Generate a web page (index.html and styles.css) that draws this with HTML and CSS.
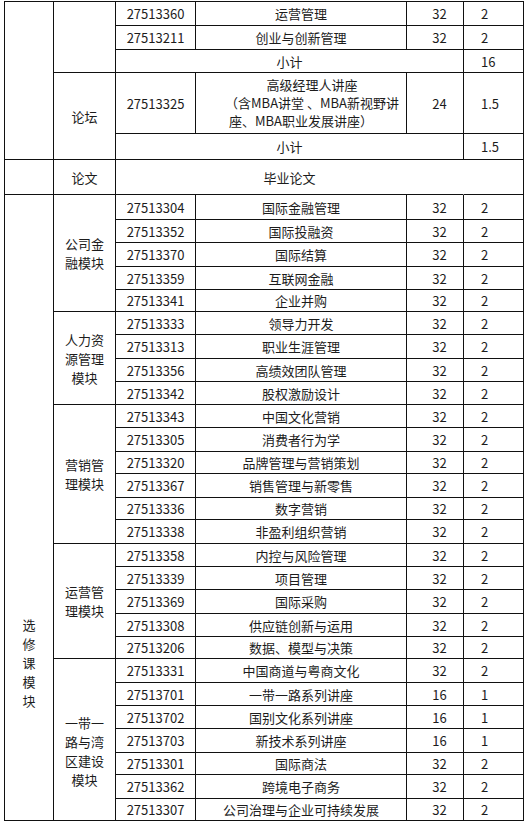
FILE: index.html
```html
<!DOCTYPE html>
<html lang="zh-CN">
<head>
<meta charset="utf-8">
<title>课程表</title>
<link rel="stylesheet" href="styles.css">
</head>
<body>
<div class="sheet">
  <div class="cell c1-top"></div>
  <div class="cell c1-thesis"></div>
  <div class="cell c1-elective"><div class="vtext">选<br>修<br>课<br>模<br>块</div></div>

  <div class="cell c2-top"></div>
  <div class="cell c2-forum">论坛</div>
  <div class="cell c2-thesis">论文</div>
  <div class="cell c2-fin">公司金<br>融模块</div>
  <div class="cell c2-hr">人力资<br>源管理<br>模块</div>
  <div class="cell c2-mkt">营销管<br>理模块</div>
  <div class="cell c2-ops">运营管<br>理模块</div>
  <div class="cell c2-br">一带一<br>路与湾<br>区建设<br>模块</div>

  <div class="cell code">27513360</div><div class="cell name">运营管理</div><div class="cell hrs">32</div><div class="cell cr">2</div>
  <div class="cell code">27513211</div><div class="cell name">创业与创新管理</div><div class="cell hrs">32</div><div class="cell cr">2</div>
  <div class="cell sum">小计</div><div class="cell cr">16</div>
  <div class="cell code">27513325</div>
  <div class="cell name multi"><div><span class="ln shift">高级经理人讲座</span><span class="ln shift">（含MBA讲堂 、MBA新视野讲</span><span class="ln">座、MBA职业发展讲座）</span></div></div>
  <div class="cell hrs">24</div><div class="cell cr">1.5</div>
  <div class="cell sum">小计</div><div class="cell cr">1.5</div>
  <div class="cell sum open">毕业论文</div><div class="cell cr"></div>

  <div class="cell code">27513304</div><div class="cell name">国际金融管理</div><div class="cell hrs">32</div><div class="cell cr">2</div>
  <div class="cell code">27513352</div><div class="cell name">国际投融资</div><div class="cell hrs">32</div><div class="cell cr">2</div>
  <div class="cell code">27513370</div><div class="cell name">国际结算</div><div class="cell hrs">32</div><div class="cell cr">2</div>
  <div class="cell code">27513359</div><div class="cell name">互联网金融</div><div class="cell hrs">32</div><div class="cell cr">2</div>
  <div class="cell code">27513341</div><div class="cell name">企业并购</div><div class="cell hrs">32</div><div class="cell cr">2</div>
  <div class="cell code">27513333</div><div class="cell name">领导力开发</div><div class="cell hrs">32</div><div class="cell cr">2</div>
  <div class="cell code">27513313</div><div class="cell name">职业生涯管理</div><div class="cell hrs">32</div><div class="cell cr">2</div>
  <div class="cell code">27513356</div><div class="cell name">高绩效团队管理</div><div class="cell hrs">32</div><div class="cell cr">2</div>
  <div class="cell code">27513342</div><div class="cell name">股权激励设计</div><div class="cell hrs">32</div><div class="cell cr">2</div>
  <div class="cell code">27513343</div><div class="cell name">中国文化营销</div><div class="cell hrs">32</div><div class="cell cr">2</div>
  <div class="cell code">27513305</div><div class="cell name">消费者行为学</div><div class="cell hrs">32</div><div class="cell cr">2</div>
  <div class="cell code">27513320</div><div class="cell name">品牌管理与营销策划</div><div class="cell hrs">32</div><div class="cell cr">2</div>
  <div class="cell code">27513367</div><div class="cell name">销售管理与新零售</div><div class="cell hrs">32</div><div class="cell cr">2</div>
  <div class="cell code">27513336</div><div class="cell name">数字营销</div><div class="cell hrs">32</div><div class="cell cr">2</div>
  <div class="cell code">27513338</div><div class="cell name">非盈利组织营销</div><div class="cell hrs">32</div><div class="cell cr">2</div>
  <div class="cell code">27513358</div><div class="cell name">内控与风险管理</div><div class="cell hrs">32</div><div class="cell cr">2</div>
  <div class="cell code">27513339</div><div class="cell name">项目管理</div><div class="cell hrs">32</div><div class="cell cr">2</div>
  <div class="cell code">27513369</div><div class="cell name">国际采购</div><div class="cell hrs">32</div><div class="cell cr">2</div>
  <div class="cell code">27513308</div><div class="cell name">供应链创新与运用</div><div class="cell hrs">32</div><div class="cell cr">2</div>
  <div class="cell code">27513206</div><div class="cell name">数据、模型与决策</div><div class="cell hrs">32</div><div class="cell cr">2</div>
  <div class="cell code">27513331</div><div class="cell name">中国商道与粤商文化</div><div class="cell hrs">32</div><div class="cell cr">2</div>
  <div class="cell code">27513701</div><div class="cell name">一带一路系列讲座</div><div class="cell hrs">16</div><div class="cell cr">1</div>
  <div class="cell code">27513702</div><div class="cell name">国别文化系列讲座</div><div class="cell hrs">16</div><div class="cell cr">1</div>
  <div class="cell code">27513703</div><div class="cell name">新技术系列讲座</div><div class="cell hrs">16</div><div class="cell cr">1</div>
  <div class="cell code">27513301</div><div class="cell name">国际商法</div><div class="cell hrs">32</div><div class="cell cr">2</div>
  <div class="cell code">27513362</div><div class="cell name">跨境电子商务</div><div class="cell hrs">32</div><div class="cell cr">2</div>
  <div class="cell code">27513307</div><div class="cell name">公司治理与企业可持续发展</div><div class="cell hrs">32</div><div class="cell cr">2</div>
</div>
</body>
</html>
```

FILE: styles.css
```css
html, body {
  margin: 0;
  padding: 0;
  background: #ffffff;
}

body {
  font-family: "Noto Sans CJK SC", "Noto Sans", sans-serif;
  font-size: 13px;
  color: #1c1c1c;
}

.sheet {
  display: grid;
  width: 520px;
  box-sizing: border-box;
  margin: 1px 0 0 4px;
  border-top: 1px solid #111;
  border-left: 1px solid #111;
  grid-template-columns: 49px 62px 80px 211px 57px 60px;
  grid-template-rows:
    24px 24px 23px 61px 26px 35px
    25px 23px 24px 23px 22px 23px 24px 23px 23px
    23px 24px 22px 24px 22px 24px 23px 23px 24px
    23px 22px 24px 23px 23px 24px 22px 24px 22px;
}

.cell {
  box-sizing: border-box;
  border-right: 1px solid #111;
  border-bottom: 1px solid #111;
  display: flex;
  align-items: center;
  justify-content: center;
  text-align: center;
  line-height: 19px;
  white-space: nowrap;
}

.c1-top { grid-column: 1; grid-row: 1 / 6; }
.c1-thesis { grid-column: 1; grid-row: 6; }
.c1-elective {
  grid-column: 1;
  grid-row: 7 / 34;
  align-items: flex-start;
  padding-top: 420px;
}

.c2-top { grid-column: 2; grid-row: 1 / 4; }
.c2-forum { grid-column: 2; grid-row: 4 / 6; }
.c2-thesis { grid-column: 2; grid-row: 6; }
.c2-fin { grid-column: 2; grid-row: 7 / 12; }
.c2-hr { grid-column: 2; grid-row: 12 / 16; }
.c2-mkt { grid-column: 2; grid-row: 16 / 22; }
.c2-ops { grid-column: 2; grid-row: 22 / 27; }
.c2-br { grid-column: 2; grid-row: 27 / 34; padding-top: 22px; }

.code { grid-column: 3; }
.name { grid-column: 4; }
.hrs { grid-column: 5; padding-left: 9px; }
.cr { grid-column: 6; justify-content: flex-start; padding-left: 17px; }
.sum { grid-column: 3 / 6; }
.sum.open { border-right-color: transparent; }

.multi { line-height: 18px; }
.ln { display: block; }
.ln.shift { padding-left: 22px; }
```
